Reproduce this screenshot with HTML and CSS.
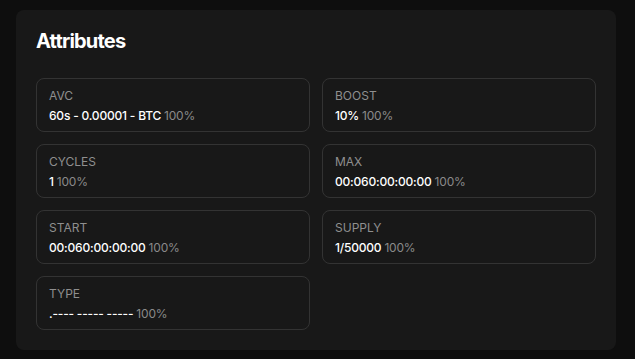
FILE: index.html
```html
<!DOCTYPE html>
<html lang="en">
  <head>
    <meta charset="UTF-8" />
    <meta name="viewport" content="width=device-width, initial-scale=1.0" />
    <title>Attributes</title>
    <link rel="stylesheet" href="styles.css">
  </head>
  <body>
    <section class="panel">
      <h2>Attributes</h2>
      <div class="attrs">
        <div class="attr">
          <div class="label">AVC</div>
          <div class="value">60s - 0.00001 - BTC <span class="pct">100%</span></div>
        </div>
        <div class="attr">
          <div class="label">BOOST</div>
          <div class="value">10% <span class="pct">100%</span></div>
        </div>
        <div class="attr">
          <div class="label">CYCLES</div>
          <div class="value">1 <span class="pct">100%</span></div>
        </div>
        <div class="attr">
          <div class="label">MAX</div>
          <div class="value">00:060:00:00:00 <span class="pct">100%</span></div>
        </div>
        <div class="attr">
          <div class="label">START</div>
          <div class="value">00:060:00:00:00 <span class="pct">100%</span></div>
        </div>
        <div class="attr">
          <div class="label">SUPPLY</div>
          <div class="value">1/50000 <span class="pct">100%</span></div>
        </div>
        <div class="attr">
          <div class="label">TYPE</div>
          <div class="value">.---- ----- ----- <span class="pct">100%</span></div>
        </div>
      </div>
    </section>
  </body>
</html>
```

FILE: styles.css
```css
body {
  margin: 0;
  padding: 10px 19px 9px 16px;
  background-color: #0e0e0e;
  color: #ffffff;
  font-family: Inter, "Noto Sans", sans-serif;
}

.panel {
  background-color: #181818;
  border-radius: 8px;
  padding: 18px 20px 20px 20px;
}

h2 {
  margin: 0 0 24px 0;
  font-size: 20px;
  line-height: 26px;
  font-weight: 700;
  letter-spacing: -0.8px;
}

.attrs {
  display: grid;
  grid-template-columns: 1fr 1fr;
  gap: 12px;
}

.attr {
  border: 1px solid #333333;
  border-radius: 8px;
  padding: 8px 12px 8px 12px;
  height: 54px;
  box-sizing: border-box;
}

.label {
  font-size: 12px;
  line-height: 18px;
  color: #8f8f8f;
  margin-bottom: 3px;
}

.value {
  font-size: 12px;
  line-height: 16px;
  font-weight: 500;
  color: #ffffff;
  letter-spacing: -0.2px;
}

.pct {
  color: #8a8a8a;
  font-weight: 400;
}
```
